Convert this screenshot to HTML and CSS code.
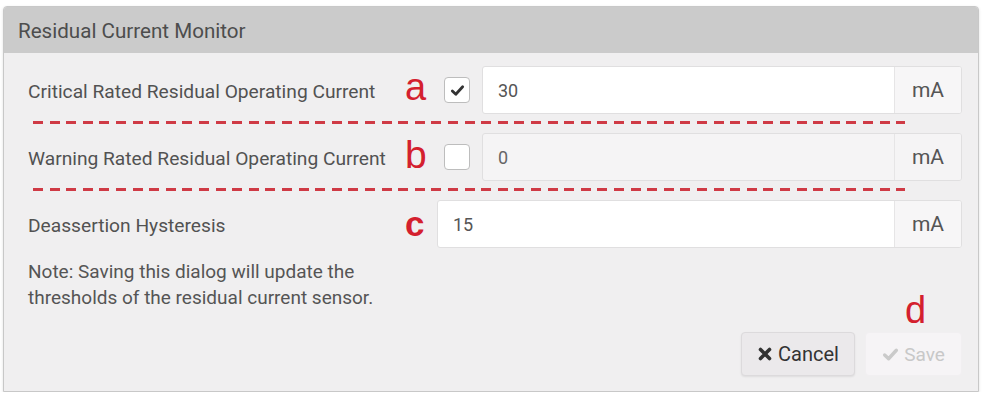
FILE: index.html
```html
<!DOCTYPE html>
<html>
<head>
<meta charset="utf-8">
<link rel="stylesheet" href="styles.css">
</head>
<body>
<div class="dialog">
  <div class="dialog-header">Residual Current Monitor</div>
  <div class="dialog-body">
    <div class="row">
      <div class="label">Critical Rated Residual Operating Current</div>
      <div class="mark mark-a">a</div>
      <div class="checkbox checked">
        <svg viewBox="0 0 16 16" width="15" height="15"><path d="M2.5 8.5 L6.2 12 L13.5 4" fill="none" stroke="#333" stroke-width="3" stroke-linecap="round" stroke-linejoin="round"/></svg>
      </div>
      <div class="input-group">
        <input class="field" type="text" value="30">
        <span class="addon">mA</span>
      </div>
    </div>
    <div class="sep"><div class="dash"></div></div>
    <div class="row">
      <div class="label">Warning Rated Residual Operating Current</div>
      <div class="mark mark-b">b</div>
      <div class="checkbox"></div>
      <div class="input-group disabled">
        <input class="field" type="text" value="0" disabled>
        <span class="addon">mA</span>
      </div>
    </div>
    <div class="sep"><div class="dash"></div></div>
    <div class="row">
      <div class="label">Deassertion Hysteresis</div>
      <div class="mark mark-c">c</div>
      <div class="input-group">
        <input class="field" type="text" value="15">
        <span class="addon">mA</span>
      </div>
    </div>
    <p class="note">Note: Saving this dialog will update the<br>thresholds of the residual current sensor.</p>
    <div class="footer">
      <button class="btn btn-cancel" type="button">
        <svg viewBox="0 0 16 16" width="16" height="16"><path d="M3.5 3.5 L12.5 12.5 M12.5 3.5 L3.5 12.5" stroke="#333" stroke-width="3.6" stroke-linecap="round"/></svg>
        Cancel
      </button>
      <div class="save-wrap">
        <span class="mark mark-d">d</span>
        <button class="btn btn-save" type="button" disabled>
          <svg viewBox="0 0 16 16" width="17" height="17"><path d="M2.5 8.5 L6.2 12 L13.5 4" fill="none" stroke="#cacaca" stroke-width="3.2" stroke-linecap="round" stroke-linejoin="round"/></svg>
          Save
        </button>
      </div>
    </div>
  </div>
</div>
</body>
</html>
```
FILE: styles.css
```css
html, body {
  margin: 0;
  padding: 0;
  background: #ffffff;
}
body {
  font-family: Roboto, "Liberation Sans", Arial, sans-serif;
  color: #555;
  padding: 6px 3px 0 3px;
}
.dialog {
  width: 974px;
  border: 1px solid #c8c8c8;
  border-radius: 4px 4px 0 0;
  background: #f0eff0;
  box-shadow: 0 1px 3px rgba(0,0,0,0.12);
}
.dialog-header {
  height: 46px;
  line-height: 48px;
  background: #cbcbcb;
  padding-left: 14px;
  font-size: 20.6px;
  color: #4d4d4d;
  border-radius: 3px 3px 0 0;
}
.dialog-body {
  padding: 13px 16px 15px 24px;
}
.row {
  display: flex;
  align-items: center;
  height: 48px;
}
.label {
  width: 377px;
  flex: none;
  font-size: 19.2px;
  color: #525252;
  padding-top: 2px;
  white-space: nowrap;
}
.mark {
  font-family: "Liberation Sans", Arial, sans-serif;
  color: #d4202e;
  line-height: 1;
}
.mark-a, .mark-b, .mark-c {
  width: 32px;
  flex: none;
}
.mark-a { font-size: 38px; margin-top: -6px; }
.mark-b { font-size: 39px; margin-top: -6px; }
.mark-c { font-size: 35px; font-weight: bold; margin-top: -2px; }
.checkbox {
  flex: none;
  width: 24px;
  height: 24px;
  margin: 0 12px 0 7px;
  border: 1px solid #bdbdbd;
  border-radius: 4px;
  background: #fff;
  display: flex;
  align-items: center;
  justify-content: center;
}
.input-group {
  flex: 1;
  display: flex;
  height: 46px;
  border: 1px solid #e0dfe0;
  border-radius: 3px;
  background: #fff;
  overflow: hidden;
}
.field {
  flex: 1;
  min-width: 0;
  border: none;
  outline: none;
  background: transparent;
  padding: 0 0 0 15px;
  font-family: Roboto, "Liberation Sans", Arial, sans-serif;
  font-size: 18px;
  color: #555;
}
.addon {
  width: 66px;
  flex: none;
  display: flex;
  align-items: center;
  justify-content: center;
  border-left: 1px solid #e6e5e6;
  background: #f7f6f7;
  font-size: 21px;
  color: #555;
}
.input-group.disabled {
  background: #f5f4f5;
}
.input-group.disabled .field {
  color: #666;
}
.input-group.disabled .addon {
  background: #f5f4f5;
}
.sep {
  height: 12px;
  padding: 7px 0 0 5px;
}
.dash {
  width: 872px;
  height: 3px;
  background: repeating-linear-gradient(to right, #cf3a45 0 10px, transparent 10px 16.6px);
}
.note {
  margin: 11px 0 0 0;
  font-size: 19px;
  line-height: 26px;
  color: #555;
}
.footer {
  display: flex;
  justify-content: flex-end;
  align-items: flex-end;
  gap: 10px;
  margin-top: 21px;
}
.btn {
  height: 44px;
  border-radius: 4px;
  font-family: Roboto, "Liberation Sans", Arial, sans-serif;
  display: flex;
  align-items: center;
  gap: 5px;
  padding: 0;
}
.btn-cancel {
  width: 114px;
  justify-content: center;
  background: #ebe9eb;
  border: 1px solid #dcdadc;
  color: #333;
  font-size: 20px;
  box-shadow: 0 1px 2px rgba(0,0,0,0.08);
}
.save-wrap {
  position: relative;
}
.btn-save {
  width: 97px;
  justify-content: center;
  background: #f6f4f6;
  border: 1px solid #f1eff1;
  color: #c8c8c8;
  font-size: 19px;
}
.mark-d {
  position: absolute;
  left: 40px;
  top: -41px;
  font-size: 38px;
}
```
